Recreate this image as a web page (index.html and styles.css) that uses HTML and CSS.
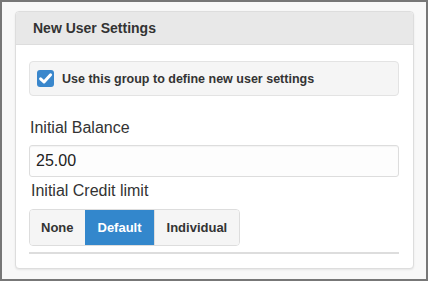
FILE: index.html
```html
<!DOCTYPE html>
<html lang="en">
<head>
<meta charset="UTF-8" />
<title>New User Settings</title>
<link rel="stylesheet" href="styles.css">
</head>
<body>

<div class="window">
  <div class="panel">
    <div class="panel-heading">New User Settings</div>
    <div class="panel-body">
      <label class="well">
        <span class="check">
          <svg width="17" height="17" viewBox="0 0 17 17">
            <rect width="17" height="17" rx="3" fill="#3a87cc" />
            <path d="M3.6 8.8 L7 12 L13.6 4.8" fill="none" stroke="#fff" stroke-width="3" stroke-linecap="round" stroke-linejoin="round" />
          </svg>
        </span>
        <span class="well-text">Use this group to define new user settings</span>
      </label>

      <div class="field-label">Initial Balance</div>
      <input class="text-input" type="text" value="25.00" />

      <div class="field-label credit">Initial Credit limit</div>
      <div class="btn-group">
        <button class="first">None</button>
        <button class="active">Default</button>
        <button>Individual</button>
      </div>
      <div class="rule"></div>
    </div>
  </div>
</div>

</body>
</html>
```

FILE: styles.css
```css
html, body {
  margin: 0; padding: 0;
}
body {
  font-family: 'Liberation Sans', Arial, sans-serif;
  color: #333;
}
.window {
  width: 428px;
  height: 281px;
  box-sizing: border-box;
  border: 2px solid #777;
  background: #f8f8f8;
  padding: 9px 12px 10px 13px;
}
.panel {
  height: 100%;
  box-sizing: border-box;
  background: #fff;
  border: 1px solid #ddd;
  border-radius: 4px;
  box-shadow: 0 1px 2px rgba(0,0,0,0.08);
  overflow: hidden;
}
.panel-heading {
  height: 32px;
  line-height: 32px;
  background: #e8e8e8;
  border-bottom: 1px solid #ddd;
  padding-left: 17px;
  font-size: 14px;
  font-weight: 700;
}
.panel-body {
  padding: 16px 14px 0 13px;
}
.well {
  display: flex;
  align-items: center;
  gap: 8px;
  height: 35px;
  box-sizing: border-box;
  padding-left: 7px;
  background: #f5f5f5;
  border: 1px solid #e3e3e3;
  border-radius: 4px;
  font-size: 12.5px;
  font-weight: 700;
}
.check svg {
  display: block;
}
.field-label {
  font-size: 16px;
  line-height: 22px;
  margin-top: 21px;
  margin-left: 1px;
}
.field-label.credit {
  margin-top: 3px;
  margin-left: 2px;
}
.text-input {
  display: block;
  width: 100%;
  height: 32px;
  box-sizing: border-box;
  margin-top: 6px;
  border: 1px solid #ddd;
  border-radius: 3px;
  background: #fdfdfd;
  padding: 0 6px;
  font-family: 'Liberation Sans', Arial, sans-serif;
  font-size: 16px;
  color: #222;
  box-shadow: inset 0 1px 1px rgba(0,0,0,0.04);
}
.btn-group {
  display: inline-flex;
  margin-top: 7px;
  border: 1px solid #ddd;
  border-radius: 4px;
  overflow: hidden;
}
.btn-group button {
  height: 35px;
  padding: 0 12px;
  border: none;
  border-left: 1px solid #ddd;
  background: #f5f5f5;
  color: #333;
  font-family: 'Liberation Sans', Arial, sans-serif;
  font-size: 13px;
  font-weight: 700;
}
.btn-group button.first {
  border-left: none;
  padding: 0 11px;
}
.btn-group button.active {
  background: #3387cc;
  border-left-color: #3387cc;
  color: #fff;
}
.rule {
  height: 2px;
  background: #ddd;
  margin-top: 6px;
}
```
